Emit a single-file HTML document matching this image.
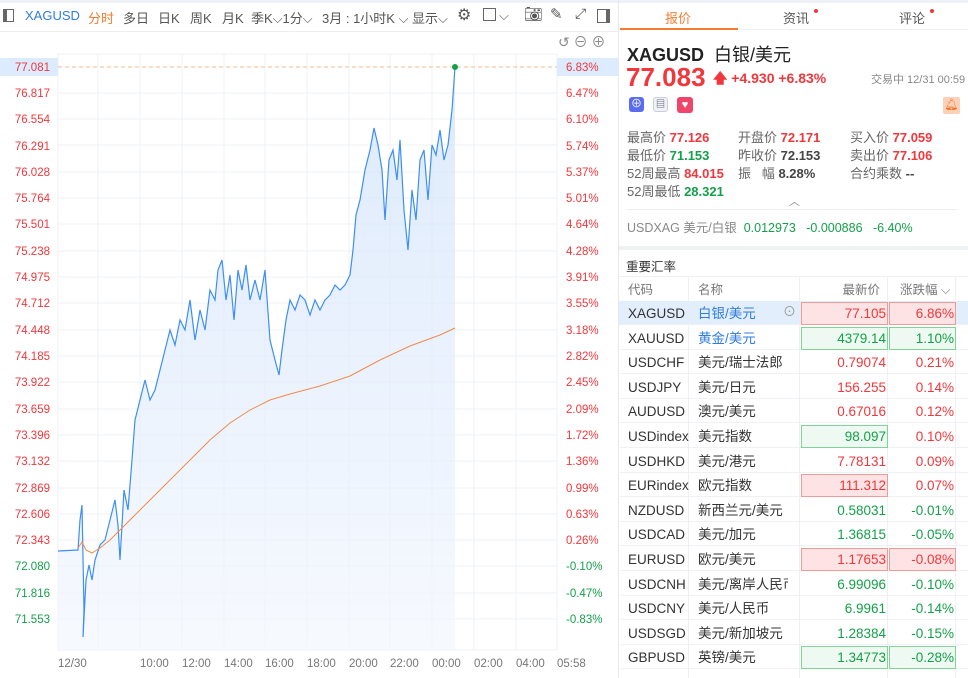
<!DOCTYPE html>
<html><head><meta charset="utf-8"><style>
*{box-sizing:border-box;margin:0;padding:0}
body{width:968px;height:678px;overflow:hidden;background:#fff;font-family:"Liberation Sans","Noto Sans CJK SC",sans-serif;font-size:13px;color:#333;position:relative}
.a{position:absolute;white-space:nowrap}
.r{color:#f0373c}.g{color:#14a04a}
.tb span{position:absolute;top:8px;font-size:13px;color:#555;white-space:nowrap}
.row{position:absolute;left:620px;width:348px;height:24px;font-size:13.5px}
.row span{position:absolute;top:4px;line-height:17px;height:17px;white-space:nowrap}
.c1{left:8px;width:64px;overflow:hidden}
.c2{left:78px}
.c3{right:82px;text-align:right}
.c4{right:14px;text-align:right}
.bx{position:absolute;top:1px;height:23px}
</style></head><body>
<div class="a" style="left:0;top:0;width:618px;height:3px;background:#eef1f6"></div>
<div class="tb">
<span style="left:3px;top:9px;width:11px;height:13px;border:1.5px solid #666;border-left-width:4px"></span>
<span style="left:25px;color:#2f7de1">XAGUSD</span>
<span style="left:88px;color:#f57d31">分时</span>
<span style="left:123px">多日</span><span style="left:158px">日K</span><span style="left:190px">周K</span><span style="left:222px">月K</span>
<span style="left:251px">季K⌵1分⌵</span>
<span style="left:322px">3月 : 1小时K ⌵</span>
<span style="left:412px">显示⌵</span>
<span style="left:457px;font-size:16px;top:5px">⚙</span>
<span style="left:483px;top:8px;width:13px;height:13px;border:1.5px solid #666"></span><span style="left:499px">⌵</span>
<span style="left:524px;top:5px;font-size:15px">📷︎</span>
<span style="left:550px;top:5px;font-size:15px">✎</span>
<span style="left:575px;top:5px;font-size:14px">⤢</span>
<span style="left:597px;top:9px;width:13px;height:14px;border:1.5px solid #666;border-right-width:4px"></span>
</div>
<div class="a" style="left:0;top:31px;width:618px;height:1px;background:#eceef2"></div>
<div class="a" style="left:558px;top:32px;font-size:14px;color:#888">↺ ⊖ ⊕</div>
<svg class="a" style="left:0;top:0" width="618" height="678">
<defs><linearGradient id="gf" x1="0" y1="0" x2="0" y2="1"><stop offset="0" stop-color="#cfe2fb"/><stop offset="1" stop-color="#f3f7fe"/></linearGradient></defs>
<g stroke="#eef0f4" stroke-width="1">
<path d="M58 54H557M58 93H557M58 119H557M58 145H557M58 172H557M58 198H557M58 224H557M58 251H557M58 277H557M58 303H557M58 330H557M58 356H557M58 382H557M58 409H557M58 435H557M58 461H557M58 488H557M58 514H557M58 540H557M58 566H557M58 593H557M58 619H557M58 650H557"/>
<path d="M58 54V650M98 54V650M140 54V650M182 54V650M224 54V650M265 54V650M307 54V650M349 54V650M390 54V650M432 54V650M474 54V650M516 54V650M557 54V650"/>
</g>
<rect x="0" y="58" width="58" height="18" fill="#dcebfd"/><rect x="557" y="58" width="61" height="18" fill="#dcebfd"/>
<path d="M58 67H557" stroke="#f7b98a" stroke-dasharray="4 3"/>
<path d="M58 551L78 550L80 520L82 505L84 610L83 637L86 580L89 565L92 580L95 560L100 545L105 540L110 520L115 500L118 525L120 560L124 490L128 510L132 460L135 420L140 400L145 380L150 400L155 390L160 370L165 350L170 330L175 345L180 320L185 330L190 300L195 340L200 310L205 330L210 290L215 300L218 270L222 260L226 300L230 275L234 320L238 270L242 290L246 265L250 300L255 280L260 300L265 270L270 340L275 360L279 375L282 350L286 320L290 300L295 310L300 295L305 300L310 315L315 300L320 310L325 300L330 295L335 285L340 290L345 285L350 275L353 250L356 215L360 200L365 170L370 150L374 128L378 145L382 170L385 220L389 160L393 150L397 180L400 140L404 210L408 250L412 190L416 220L420 160L424 150L428 200L432 145L436 155L440 130L444 160L448 145L452 110L455 67L455 650L58 650Z" fill="url(#gf)" opacity=".7"/>
<path d="M58 551L78 550L80 520L82 505L84 610L83 637L86 580L89 565L92 580L95 560L100 545L105 540L110 520L115 500L118 525L120 560L124 490L128 510L132 460L135 420L140 400L145 380L150 400L155 390L160 370L165 350L170 330L175 345L180 320L185 330L190 300L195 340L200 310L205 330L210 290L215 300L218 270L222 260L226 300L230 275L234 320L238 270L242 290L246 265L250 300L255 280L260 300L265 270L270 340L275 360L279 375L282 350L286 320L290 300L295 310L300 295L305 300L310 315L315 300L320 310L325 300L330 295L335 285L340 290L345 285L350 275L353 250L356 215L360 200L365 170L370 150L374 128L378 145L382 170L385 220L389 160L393 150L397 180L400 140L404 210L408 250L412 190L416 220L420 160L424 150L428 200L432 145L436 155L440 130L444 160L448 145L452 110L455 67" fill="none" stroke="#3d8ef5" stroke-width="1.2"/>
<path d="M78 548L82 542L86 550L92 553L100 548L110 540L120 530L135 515L150 500L170 480L190 460L210 440L230 423L250 410L270 400L290 394L320 386L350 376L380 360L410 346L440 335L455 328" fill="none" stroke="#f28a4a" stroke-width="1"/>
<circle cx="455" cy="67" r="3" fill="#14a04a"/>
<g font-size="11.5" font-family="Liberation Sans,sans-serif" text-anchor="end">
<g fill="#f0373c"><text x="50" y="71">77.081</text><text x="50" y="97">76.817</text><text x="50" y="123">76.554</text><text x="50" y="150">76.291</text><text x="50" y="176">76.028</text><text x="50" y="202">75.764</text><text x="50" y="228">75.501</text><text x="50" y="255">75.238</text><text x="50" y="281">74.975</text><text x="50" y="307">74.712</text><text x="50" y="334">74.448</text><text x="50" y="360">74.185</text><text x="50" y="386">73.922</text><text x="50" y="413">73.659</text><text x="50" y="439">73.396</text><text x="50" y="465">73.132</text><text x="50" y="492">72.869</text><text x="50" y="518">72.606</text><text x="50" y="544">72.343</text></g>
<g fill="#14a04a"><text x="50" y="570">72.080</text><text x="50" y="597">71.816</text><text x="50" y="623">71.553</text></g>
</g>
<g font-size="11.5" font-family="Liberation Sans,sans-serif">
<g fill="#f0373c"><text x="566" y="71">6.83%</text><text x="566" y="97">6.47%</text><text x="566" y="123">6.10%</text><text x="566" y="150">5.74%</text><text x="566" y="176">5.37%</text><text x="566" y="202">5.01%</text><text x="566" y="228">4.64%</text><text x="566" y="255">4.28%</text><text x="566" y="281">3.91%</text><text x="566" y="307">3.55%</text><text x="566" y="334">3.18%</text><text x="566" y="360">2.82%</text><text x="566" y="386">2.45%</text><text x="566" y="413">2.09%</text><text x="566" y="439">1.72%</text><text x="566" y="465">1.36%</text><text x="566" y="492">0.99%</text><text x="566" y="518">0.63%</text><text x="566" y="544">0.26%</text></g>
<g fill="#14a04a"><text x="566" y="570">-0.10%</text><text x="566" y="597">-0.47%</text><text x="566" y="623">-0.83%</text></g>
<g fill="#777"><text x="58" y="667">12/30</text><text x="140" y="667">10:00</text><text x="182" y="667">12:00</text><text x="224" y="667">14:00</text><text x="265" y="667">16:00</text><text x="307" y="667">18:00</text><text x="349" y="667">20:00</text><text x="390" y="667">22:00</text><text x="432" y="667">00:00</text><text x="474" y="667">02:00</text><text x="516" y="667">04:00</text><text x="557" y="667">05:58</text></g>
</g>
</svg>
<div class="a" style="left:618px;top:0;width:1px;height:678px;background:#e6e8ec"></div>
<div class="a" style="left:619px;top:0;width:349px;height:3px;background:#eef1f6"></div>
<div class="a" style="left:665px;top:8px;color:#f57d31;font-size:13px">报价</div>
<div class="a" style="left:783px;top:8px;color:#555">资讯</div><div class="a" style="left:814px;top:9px;width:4px;height:4px;border-radius:2px;background:#f0373c"></div>
<div class="a" style="left:899px;top:8px;color:#555">评论</div><div class="a" style="left:930px;top:9px;width:4px;height:4px;border-radius:2px;background:#f0373c"></div>
<div class="a" style="left:620px;top:28px;width:118px;height:2px;background:#f57d31"></div>
<div class="a" style="left:738px;top:29px;width:230px;height:1px;background:#eceef2"></div>
<div class="a" style="left:627px;top:41px;font-size:18px;font-weight:bold;color:#222">XAGUSD <span style="font-weight:normal">&nbsp;白银/美元</span></div>
<div class="a r" style="left:626px;top:62px;font-size:26px;font-weight:bold">77.083</div>
<div class="a r" style="left:713px;top:68px;font-size:14px;font-weight:bold">🡅 +4.930 +6.83%</div>
<div class="a" style="left:871px;top:71px;font-size:11px;color:#888">交易中 12/31 00:59</div>
<div class="a" style="left:629px;top:97px;width:15px;height:15px;border-radius:3px;background:#5a6cf0;color:#fff;font-size:11px;text-align:center;line-height:15px">⊕</div>
<div class="a" style="left:653px;top:97px;width:15px;height:15px;border-radius:3px;border:1px solid #ccd;background:#eef1f6;font-size:9px;text-align:center;line-height:13px;color:#445">▤</div>
<div class="a" style="left:677px;top:97px;width:16px;height:16px;border-radius:3px;background:#f0456a;color:#fff;font-size:11px;text-align:center;line-height:16px">♥</div>
<div class="a" style="left:943px;top:97px;width:17px;height:17px;border-radius:2px;background:#fdd0b8;color:#f56a1a;font-size:11px;text-align:center;line-height:17px">🔔︎</div>
<div class="a" style="left:627px;top:129px;color:#666;line-height:18px">最高价 <b class="r">77.126</b><br>最低价 <b class="g">71.153</b><br>52周最高 <b class="r">84.015</b><br>52周最低 <b class="g">28.321</b></div>
<div class="a" style="left:738px;top:129px;color:#666;line-height:18px">开盘价 <b class="r">72.171</b><br>昨收价 <b style="color:#444">72.153</b><br>振&nbsp;&nbsp;&nbsp;幅 <b style="color:#444">8.28%</b></div>
<div class="a" style="left:850px;top:129px;color:#666;line-height:18px">买入价 <b class="r">77.059</b><br>卖出价 <b class="r">77.106</b><br>合约乘数 <b style="color:#444">--</b></div>
<div class="a" style="left:789px;top:193px;color:#888;font-size:11px">︿</div>
<div class="a" style="left:627px;top:209px;width:330px;height:1px;background:#eceef2"></div>
<div class="a" style="left:627px;top:217px;font-size:12.5px;color:#888">USDXAG 美元/白银 &nbsp;<span class="g">0.012973 &nbsp;&nbsp;-0.000886 &nbsp;&nbsp;-6.40%</span></div>
<div class="a" style="left:619px;top:246px;width:349px;height:4px;background:#eef1f6"></div>
<div class="a" style="left:626px;top:256px;font-size:12.5px;color:#333">重要汇率</div>
<div class="a" style="left:619px;top:276px;width:349px;height:1px;background:#eef0f4"></div>
<div class="row" style="top:278px;color:#777;font-size:12.5px"><span class="c1">代码</span><span style="left:78px">名称</span><span class="c3" style="right:88px">最新价</span><span style="left:280px">涨跌幅 ⌵</span></div>
<div class="a" style="left:688px;top:277px;width:1px;height:401px;background:#eef0f4"></div>
<div class="a" style="left:799px;top:277px;width:1px;height:401px;background:#eef0f4"></div>
<div class="a" style="left:887px;top:277px;width:1px;height:401px;background:#eef0f4"></div>
<div class="a" style="left:955px;top:277px;width:1px;height:401px;background:#eef0f4"></div>
<div class="a" style="left:619px;top:301px;width:349px;height:24px;background:#e3eefc"></div>
<div id="rows"></div>
<script>
var d=[["XAGUSD","白银/美元","77.105","6.86%","r","r","R","R",1],
["XAUUSD","黄金/美元","4379.14","1.10%","g","g","G","G",1],
["USDCHF","美元/瑞士法郎","0.79074","0.21%","r","r"],
["USDJPY","美元/日元","156.255","0.14%","r","r"],
["AUDUSD","澳元/美元","0.67016","0.12%","r","r"],
["USDindex","美元指数","98.097","0.10%","g","r","G"],
["USDHKD","美元/港元","7.78131","0.09%","r","r"],
["EURindex","欧元指数","111.312","0.07%","r","r","R"],
["NZDUSD","新西兰元/美元","0.58031","-0.01%","g","g"],
["USDCAD","美元/加元","1.36815","-0.05%","g","g"],
["EURUSD","欧元/美元","1.17653","-0.08%","r","r","R","R"],
["USDCNH","美元/离岸人民币","6.99096","-0.10%","g","g"],
["USDCNY","美元/人民币","6.9961","-0.14%","g","g"],
["USDSGD","美元/新加坡元","1.28384","-0.15%","g","g"],
["GBPUSD","英镑/美元","1.34773","-0.28%","g","g","G","G"]];
var h="";d.forEach(function(r,i){var t=301+i*24.6;
function bx(k,l,w){if(!k)return"";var c=k=="R"?"background:#fde3e3;border:1px solid #f19a9a":"background:#eefaf1;border:1px solid #7fd49a";return '<div class="bx" style="left:'+l+'px;width:'+w+'px;'+c+'"></div>'}
h+='<div class="row" style="top:'+t+'px;border-bottom:1px solid #f0f1f4">'+bx(r[6],181,87)+bx(r[7],269,67)+'<span class="c1">'+r[0]+'</span><span class="c2" style="width:90px;overflow:hidden;'+(r[8]?'color:#2f7de1':'')+'">'+r[1]+'</span><span class="c3 '+r[4]+'">'+r[2]+'</span><span class="c4 '+r[5]+'">'+r[3]+'</span>'+(i==0?'<span style="left:163px;top:2px;color:#999;font-size:13px">⊙</span>':'')+'</div>'});
document.getElementById("rows").innerHTML=h;
</script>
</body></html>
